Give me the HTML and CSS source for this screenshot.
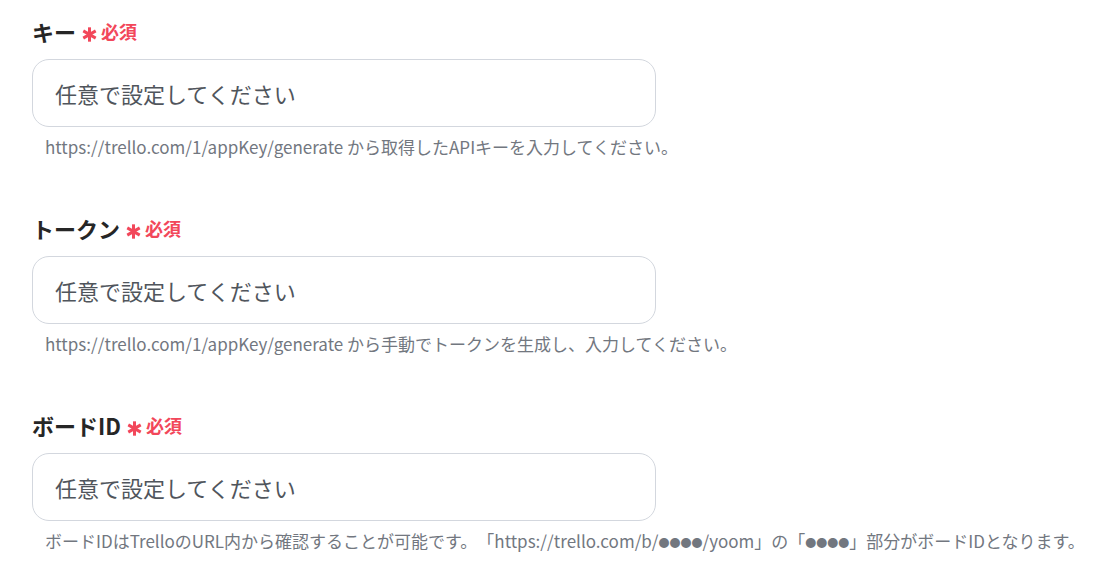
FILE: index.html
```html
<!DOCTYPE html>
<html lang="ja">
<head>
<meta charset="utf-8">
<link rel="stylesheet" href="styles.css">
</head>
<body>
<div class="form">
  <div class="field">
    <div class="label">キー<span class="req"><svg class="ast" viewBox="0 0 14 14"><g stroke="#f2475a" stroke-width="2.8"><line x1="7" y1="0.3" x2="7" y2="13.7"/><line x1="1.2" y1="3.65" x2="12.8" y2="10.35"/><line x1="1.2" y1="10.35" x2="12.8" y2="3.65"/></g></svg>必須</span></div>
    <div class="input">任意で設定してください</div>
    <div class="help">https://trello.com/1/appKey/generate から取得したAPIキーを入力してください。</div>
  </div>
  <div class="field">
    <div class="label">トークン<span class="req"><svg class="ast" viewBox="0 0 14 14"><g stroke="#f2475a" stroke-width="2.8"><line x1="7" y1="0.3" x2="7" y2="13.7"/><line x1="1.2" y1="3.65" x2="12.8" y2="10.35"/><line x1="1.2" y1="10.35" x2="12.8" y2="3.65"/></g></svg>必須</span></div>
    <div class="input">任意で設定してください</div>
    <div class="help">https://trello.com/1/appKey/generate から手動でトークンを生成し、入力してください。</div>
  </div>
  <div class="field">
    <div class="label">ボードID<span class="req"><svg class="ast" viewBox="0 0 14 14"><g stroke="#f2475a" stroke-width="2.8"><line x1="7" y1="0.3" x2="7" y2="13.7"/><line x1="1.2" y1="3.65" x2="12.8" y2="10.35"/><line x1="1.2" y1="10.35" x2="12.8" y2="3.65"/></g></svg>必須</span></div>
    <div class="input">任意で設定してください</div>
    <div class="help">ボードIDはTrelloのURL内から確認することが可能です。「https://trello.com/b/<span class="dots">●●●●</span>/yoom」の「<span class="dots">●●●●</span>」部分がボードIDとなります。</div>
  </div>
</div>
</body>
</html>
```
FILE: styles.css
```css
html, body {
  margin: 0;
  padding: 0;
  background: #ffffff;
}
body {
  font-family: "Noto Sans CJK JP", "Noto Sans", sans-serif;
}
.form {
  padding: 16px 0 0 32px;
  display: flex;
  flex-direction: column;
  gap: 54px;
}
.field {
  display: flex;
  flex-direction: column;
}
.label {
  font-size: 22px;
  font-weight: 700;
  line-height: 31px;
  color: #262626;
  display: flex;
  align-items: center;
}
.req {
  display: inline-flex;
  align-items: center;
  margin-left: 6px;
  font-size: 18px;
  font-weight: 700;
  color: #f2475a;
}
.ast {
  width: 15px;
  height: 15px;
  margin-top: 6px;
  margin-right: 4px;
}
.input {
  margin-top: 12px;
  box-sizing: border-box;
  width: 624px;
  height: 68px;
  border: 1px solid #d3d7de;
  border-radius: 17px;
  padding: 0 0 0 22px;
  display: flex;
  align-items: center;
  font-size: 22px;
  color: #50555c;
}
.help {
  margin-top: 8px;
  padding-left: 13px;
  font-size: 17px;
  line-height: 24px;
  color: #72777f;
  white-space: nowrap;
  text-spacing-trim: space-all;
}
.dots {
  font-size: 11px;
  vertical-align: 1px;
}
```
